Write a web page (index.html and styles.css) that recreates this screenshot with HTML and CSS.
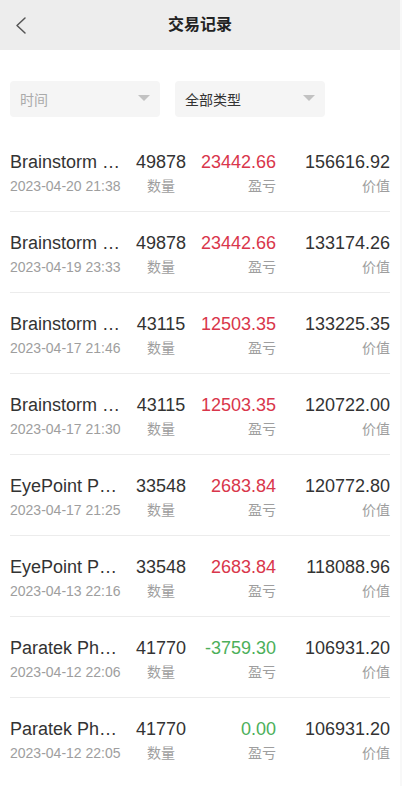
FILE: index.html
```html
<!DOCTYPE html>
<html lang="zh-CN">
<head>
<meta charset="utf-8">
<title>交易记录</title>
<link rel="stylesheet" href="styles.css">
</head>
<body>
<div class="app">
  <header class="topbar">
    <span class="back">
      <svg width="14" height="20" viewBox="0 0 14 20"><polyline points="11,2 3,9.5 11,17" fill="none" stroke="#555" stroke-width="1.5" stroke-linecap="round" stroke-linejoin="round"/></svg>
    </span>
    <h1 class="title">交易记录</h1>
  </header>

  <div class="filters">
    <div class="select placeholder"><span>时间</span><i class="caret"></i></div>
    <div class="select"><span>全部类型</span><i class="caret"></i></div>
  </div>

  <ul class="list">
    <li class="row">
      <div class="col name"><div class="main">Brainstorm Cell Therapeutics</div><div class="sub">2023-04-20 21:38</div></div>
      <div class="col qty"><div class="main">49878</div><div class="sub">数量</div></div>
      <div class="col pl"><div class="main red">23442.66</div><div class="sub">盈亏</div></div>
      <div class="col val"><div class="main">156616.92</div><div class="sub">价值</div></div>
    </li>
    <li class="row">
      <div class="col name"><div class="main">Brainstorm Cell Therapeutics</div><div class="sub">2023-04-19 23:33</div></div>
      <div class="col qty"><div class="main">49878</div><div class="sub">数量</div></div>
      <div class="col pl"><div class="main red">23442.66</div><div class="sub">盈亏</div></div>
      <div class="col val"><div class="main">133174.26</div><div class="sub">价值</div></div>
    </li>
    <li class="row">
      <div class="col name"><div class="main">Brainstorm Cell Therapeutics</div><div class="sub">2023-04-17 21:46</div></div>
      <div class="col qty"><div class="main">43115</div><div class="sub">数量</div></div>
      <div class="col pl"><div class="main red">12503.35</div><div class="sub">盈亏</div></div>
      <div class="col val"><div class="main">133225.35</div><div class="sub">价值</div></div>
    </li>
    <li class="row">
      <div class="col name"><div class="main">Brainstorm Cell Therapeutics</div><div class="sub">2023-04-17 21:30</div></div>
      <div class="col qty"><div class="main">43115</div><div class="sub">数量</div></div>
      <div class="col pl"><div class="main red">12503.35</div><div class="sub">盈亏</div></div>
      <div class="col val"><div class="main">120722.00</div><div class="sub">价值</div></div>
    </li>
    <li class="row">
      <div class="col name"><div class="main">EyePoint Pharmaceuticals</div><div class="sub">2023-04-17 21:25</div></div>
      <div class="col qty"><div class="main">33548</div><div class="sub">数量</div></div>
      <div class="col pl"><div class="main red">2683.84</div><div class="sub">盈亏</div></div>
      <div class="col val"><div class="main">120772.80</div><div class="sub">价值</div></div>
    </li>
    <li class="row">
      <div class="col name"><div class="main">EyePoint Pharmaceuticals</div><div class="sub">2023-04-13 22:16</div></div>
      <div class="col qty"><div class="main">33548</div><div class="sub">数量</div></div>
      <div class="col pl"><div class="main red">2683.84</div><div class="sub">盈亏</div></div>
      <div class="col val"><div class="main">118088.96</div><div class="sub">价值</div></div>
    </li>
    <li class="row">
      <div class="col name"><div class="main">Paratek Pharmaceuticals</div><div class="sub">2023-04-12 22:06</div></div>
      <div class="col qty"><div class="main">41770</div><div class="sub">数量</div></div>
      <div class="col pl"><div class="main green">-3759.30</div><div class="sub">盈亏</div></div>
      <div class="col val"><div class="main">106931.20</div><div class="sub">价值</div></div>
    </li>
    <li class="row">
      <div class="col name"><div class="main">Paratek Pharmaceuticals</div><div class="sub">2023-04-12 22:05</div></div>
      <div class="col qty"><div class="main">41770</div><div class="sub">数量</div></div>
      <div class="col pl"><div class="main green">0.00</div><div class="sub">盈亏</div></div>
      <div class="col val"><div class="main">106931.20</div><div class="sub">价值</div></div>
    </li>
  </ul>
</div>
</body>
</html>
```
FILE: styles.css
```css
* { box-sizing: border-box; }
html, body {
  margin: 0;
  padding: 0;
  background: #f8f8f8;
}
body {
  font-family: "Liberation Sans", "Noto Sans CJK SC", Arial, sans-serif;
  color: #333;
}
.app {
  width: 400px;
  min-height: 786px;
  background: #fff;
}
.topbar {
  height: 50px;
  background: #ededed;
  display: flex;
  align-items: center;
  justify-content: center;
  position: relative;
}
.back {
  position: absolute;
  left: 14px;
  top: 16px;
  width: 14px;
  height: 20px;
  display: flex;
}
.title {
  margin: 0;
  font-size: 16px;
  font-weight: bold;
  color: #222;
  line-height: 20px;
}
.filters {
  display: flex;
  gap: 15px;
  padding: 31px 10px 0;
}
.select {
  width: 150px;
  height: 36px;
  background: #f5f5f5;
  border-radius: 4px;
  display: flex;
  align-items: center;
  justify-content: space-between;
  padding: 0 10px;
  font-size: 14px;
  color: #333;
}
.select.placeholder { color: #aaa; }
.caret {
  width: 0;
  height: 0;
  border-left: 6px solid transparent;
  border-right: 6px solid transparent;
  border-top: 6px solid #c2c2c2;
  margin-top: -2px;
}
.list {
  list-style: none;
  margin: 14px 10px 0;
  padding: 0;
}
.row {
  display: grid;
  grid-template-columns: 112px 78px 76px 114px;
  padding: 20px 0 16px;
  border-bottom: 1px solid #ececec;
}
.row:last-child { border-bottom: none; }
.col { min-width: 0; }
.main {
  font-size: 18px;
  line-height: 23px;
  color: #333;
  white-space: nowrap;
}
.sub {
  margin-top: 3px;
  font-size: 14px;
  line-height: 18px;
  color: #9e9e9e;
  white-space: nowrap;
}
.name .main {
  overflow: hidden;
  text-overflow: ellipsis;
}
.qty { text-align: center; }
.pl, .val { text-align: right; }
.red { color: #d9364b; }
.green { color: #4caf5a; }
```
